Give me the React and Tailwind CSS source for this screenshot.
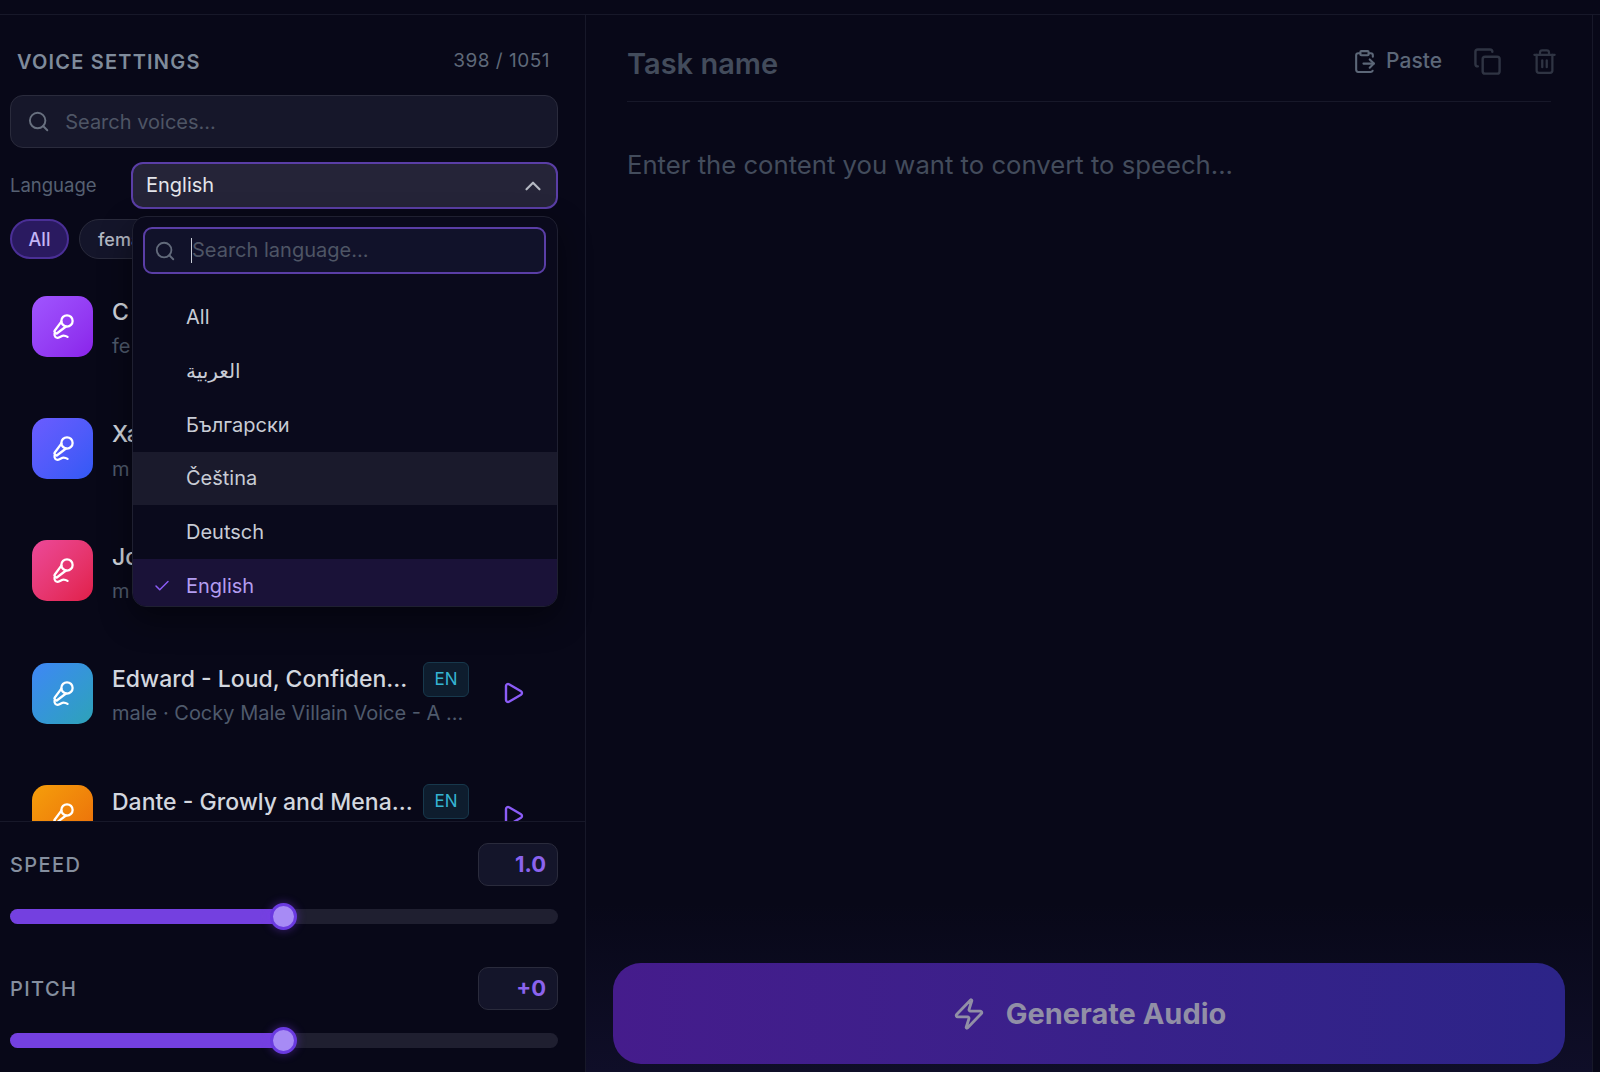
import { Check, ChevronUp, ClipboardPaste, Copy, MicVocal, Play, Search, Trash2, Zap } from "lucide-react";

const voices = [
  { name: "C", sub: "fe", color: "from-[#a055ff] to-[#8a22ea]" },
  { name: "Xa", sub: "m", color: "from-[#6a5cff] to-[#3159f5]" },
  { name: "Jo", sub: "m", color: "from-[#ec4899] to-[#e11d48]" },
  { name: "Edward - Loud, Confiden...", sub: "male · Cocky Male Villain Voice - A ...", color: "from-[#3f86f6] to-[#2ea2b8]", tag: true },
  { name: "Dante - Growly and Mena...", color: "from-[#f59e0b] to-[#ea6a0a]", tag: true },
];

const languages = ["All", "العربية", "Български", "Čeština", "Deutsch", "English"];

const VoiceRow = ({ voice }) => (
  <div className="flex h-[122.4px] shrink-0 items-center pl-[32px]">
    <div className={`flex size-[61px] shrink-0 items-center justify-center rounded-[15px] bg-gradient-to-br ${voice.color}`}>
      <MicVocal className="size-[27px] text-white" strokeWidth={2} />
    </div>
    <div className="ml-[19px] mt-[2px] h-[66px] min-w-0">
      <div className="flex h-[36px] items-center gap-[12px]">
        <span className="w-[299px] whitespace-nowrap text-[23px] font-medium text-[#d3d7df]">{voice.name}</span>
        {voice.tag && (
          <span className="flex h-[35px] w-[46px] items-center justify-center rounded-[6px] border border-[#17384c] bg-[#0e1d2e] text-[17px] text-[#35b4d2]">
            EN
          </span>
        )}
      </div>
      {voice.sub && <div className="mt-[1px] whitespace-nowrap text-[20px] text-[#4f5a6c]">{voice.sub}</div>}
    </div>
    {voice.tag && <Play className="ml-[32px] size-[24px] shrink-0 text-[#8b5cf6]" strokeWidth={2.4} />}
  </div>
);

const SliderRow = ({ label, value }) => (
  <div className="h-[124px]">
    <div className="flex h-[43px] items-center justify-between">
      <span className="text-[20px] font-medium tracking-[1.4px] text-[#858f9f]">{label}</span>
      <span className="flex h-[43px] w-[80px] items-center justify-end rounded-[10px] border border-[#2a2b3c] bg-[#14152a] pr-[11px] text-[22px] font-bold text-[#8b63ee]">
        {value}
      </span>
    </div>
    <div className="relative mt-[23px] h-[15px] rounded-full bg-[#1f1f30]">
      <div className="h-full w-1/2 rounded-full bg-[#7440e0]" />
      <div className="absolute left-[260px] top-[-6px] size-[27px] rounded-full border-[3px] border-[#6a3ae0] bg-[#a78bf5] shadow-[0_0_10px_rgba(124,58,237,0.45)]" />
    </div>
  </div>
);

const LanguageMenu = () => (
  <div className="absolute left-[132px] top-[201px] z-10 h-[391px] w-[426px] overflow-hidden rounded-[14px] border border-[#1f2031] bg-[#0a0a1c] shadow-[0_12px_32px_rgba(0,0,0,0.45)]">
    <div className="pl-[10px] pr-[11px] pt-[10px]">
      <div className="flex h-[47px] items-center rounded-[9px] border-2 border-[#5a3ea6] bg-[#11122a] pl-[9px]">
        <Search className="size-[22px] text-[#626a7b]" strokeWidth={2} />
        <span className="ml-[15px] h-[25px] w-px bg-[#c9cdd6]" />
        <span className="pb-[1px] text-[20px] text-[#4e5565]">Search language...</span>
      </div>
    </div>
    <div className="mt-[16.5px]">
      {languages.map((lang) => {
        const selected = lang === "English";
        const hovered = lang === "Čeština";
        return (
          <div
            key={lang}
            className={`flex h-[53.7px] items-center pl-[53px] text-[20px] ${
              selected ? "relative bg-[#1a1238] text-[#b39df0]" : hovered ? "bg-[#1a1a2c] text-[#c8ccd5]" : "text-[#c8ccd5]"
            }`}
          >
            {selected && <Check className="absolute left-[20px] size-[18px] text-[#8b5cf6]" strokeWidth={2} />}
            {lang}
          </div>
        );
      })}
    </div>
  </div>
);

export default function App() {
  return (
    <div className="h-[1072px] overflow-hidden bg-[#080818] [font-family:Inter,'DejaVu_Sans',sans-serif]">
      <div className="h-[15px] border-b border-[#171829]" />
      <div className="flex h-[1057px]">
        <aside className="relative flex w-[586px] shrink-0 flex-col border-r border-[#171829]">
          <div className="flex flex-col pl-[10px] pr-[27px]">
            <div className="flex h-[80px] items-center justify-between pl-[7px] pr-[8px] pt-[13px]">
              <span className="text-[20px] font-semibold tracking-[1.2px] text-[#7f8b9b]">VOICE SETTINGS</span>
              <span className="text-[19px] tracking-[0.5px] text-[#5f6979]">398 / 1051</span>
            </div>
            <div className="flex h-[53px] items-center rounded-[13px] border border-[#2a2b3c] bg-[#16172a] pl-[16px]">
              <Search className="size-[25px] text-[#68707f]" strokeWidth={2} />
              <input
                className="ml-[15px] w-full bg-transparent text-[20px] outline-none placeholder:text-[#4e5565]"
                placeholder="Search voices..."
              />
            </div>
            <div className="mt-[14px] flex h-[47px] items-center gap-[17px]">
              <span className="w-[104px] text-[18.5px] text-[#566072]">Language</span>
              <div className="flex h-full flex-1 items-center justify-between rounded-[12px] border-2 border-[#5a3ea6] bg-[#252438] pl-[13px] pr-[10px]">
                <span className="pb-[1px] text-[20px] text-[#e3e5ea]">English</span>
                <ChevronUp className="size-[26px] text-[#b4b8c2]" strokeWidth={2} />
              </div>
            </div>
            <div className="mt-[10px] flex h-[40px] gap-[10px]">
              <span className="flex w-[59px] items-center justify-center rounded-full border-2 border-[#4a2f96] bg-[#2a1a60] text-[18px] font-medium text-[#c4b5f5]">
                All
              </span>
              <span className="flex w-[110px] items-center rounded-full border border-[#2a2b3c] bg-[#14152a] pl-[18px] text-[18px] font-medium text-[#b4b9c4]">
                female
              </span>
            </div>
          </div>
          <LanguageMenu />
          <div className="mt-[6px] flex flex-1 flex-col overflow-hidden">
            {voices.map((voice) => (
              <VoiceRow key={voice.name} voice={voice} />
            ))}
          </div>
          <div className="h-[251px] border-t border-[#171829] pl-[10px] pr-[27px] pt-[21px]">
            <SliderRow label="SPEED" value="1.0" />
            <SliderRow label="PITCH" value="+0" />
          </div>
        </aside>
        <main className="flex flex-1 flex-col">
          <div className="mr-[7px] flex flex-1 flex-col border-r border-[#171829]">
            <div className="flex flex-1 flex-col pl-[41px] pr-[41px]">
              <div className="flex h-[87px] shrink-0 items-center justify-between border-b border-[#171829] pt-[12px]">
                <span className="text-[29px] font-semibold text-[#434c5c]">Task name</span>
                <div className="-mr-[7px] mb-[6px] flex items-center">
                  <ClipboardPaste className="size-[25px] text-[#5c6778]" strokeWidth={2} />
                  <span className="ml-[9px] text-[21px] font-medium text-[#5c6778]">Paste</span>
                  <Copy className="ml-[31px] size-[29px] text-[#2f3443]" strokeWidth={2} />
                  <Trash2 className="ml-[29px] size-[27px] text-[#2f3443]" strokeWidth={2} />
                </div>
              </div>
              <textarea
                className="mt-[44px] flex-1 resize-none bg-transparent text-[25.7px] outline-none placeholder:text-[#434c5c]"
                placeholder="Enter the content you want to convert to speech..."
              />
            </div>
            <div className="bg-gradient-to-t from-[#0f0e28] to-transparent pb-[8px] pl-[27px] pr-[27px] pt-[60px]">
              <button className="flex h-[101px] w-full items-center justify-center gap-[20px] rounded-[28px] bg-gradient-to-r from-[#451c8c] to-[#2c2488] text-[29px] font-bold text-[#918fa6]">
                <Zap className="size-[34px] text-[#918fa6]" strokeWidth={2} />
                Generate Audio
              </button>
            </div>
          </div>
        </main>
      </div>
    </div>
  );
}
